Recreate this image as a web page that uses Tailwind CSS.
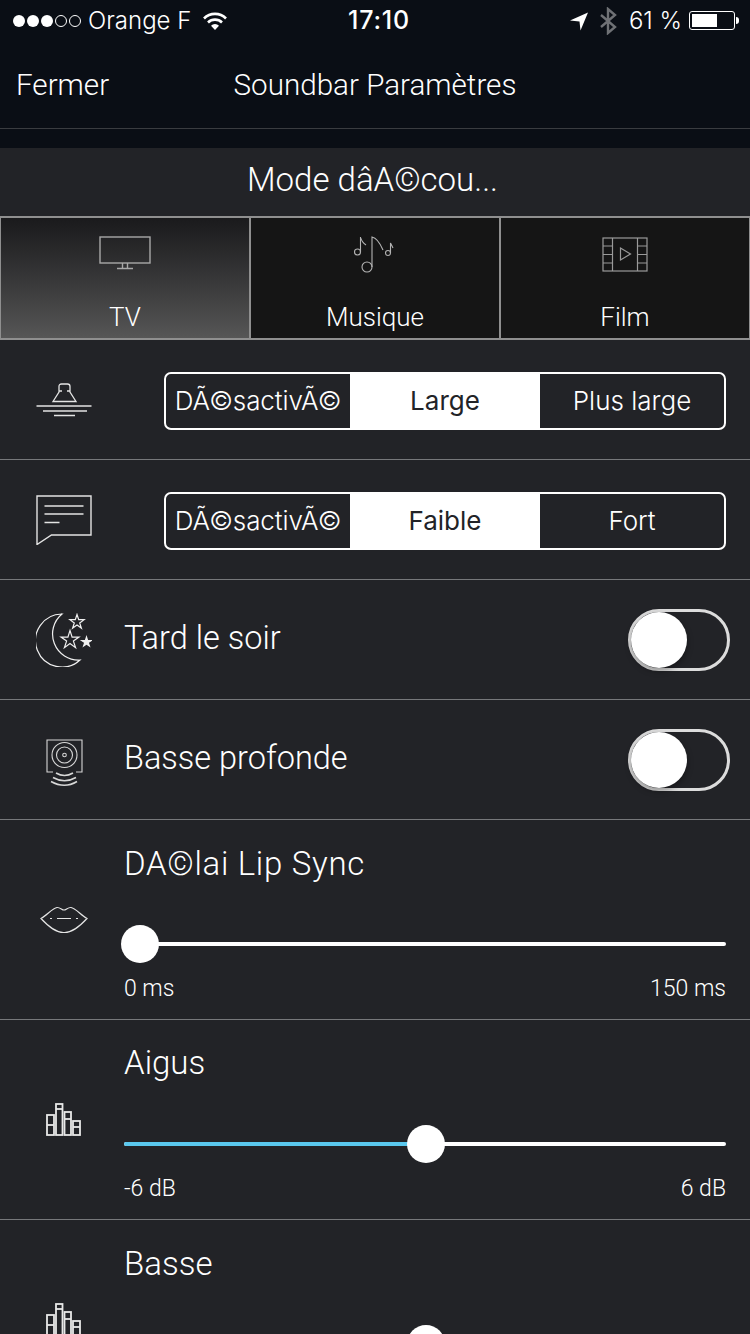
<!DOCTYPE html>
<html lang="fr">
<head>
    <meta charset="UTF-8">
    <meta name="viewport" content="width=device-width, initial-scale=1.0">
    <title>Soundbar Paramètres</title>
    <script src="https://cdn.jsdelivr.net/npm/@tailwindcss/browser@4"></script>
</head>
<body class="bg-[#222327] font-[Roboto,sans-serif] font-light text-white">
<div class="w-[750px] h-[1334px] overflow-hidden">

    <!-- Barre de statut + navigation -->
    <header class="bg-[#0a0e15] h-[148px]">
        <div class="h-[40px] pt-[1px] flex items-center justify-between pl-[13px] pr-[11px] font-[Inter,sans-serif] font-normal text-[24px] relative">
            <div class="flex items-center">
                <div class="flex gap-[2px] mr-[7px]">
                    <span class="w-[12px] h-[12px] rounded-full bg-white"></span>
                    <span class="w-[12px] h-[12px] rounded-full bg-white"></span>
                    <span class="w-[12px] h-[12px] rounded-full bg-white"></span>
                    <span class="w-[12px] h-[12px] rounded-full border border-white"></span>
                    <span class="w-[12px] h-[12px] rounded-full border border-white"></span>
                </div>
                <span class="font-light">Orange F</span>
                <svg class="ml-[11px]" width="26" height="20" viewBox="0 0 26 20" fill="none" stroke="white" stroke-width="2.6">
                    <path d="M2 7.5a15.5 15.5 0 0 1 22 0"/>
                    <path d="M6 11.5a10 10 0 0 1 14 0"/>
                    <path d="M13 19l-4-4.2a5.6 5.6 0 0 1 8 0z" fill="white" stroke="none"/>
                </svg>
            </div>
            <div class="absolute left-[348px] top-[5px] font-medium text-[25px] leading-[30px] tracking-[0.8px]">17:10</div>
            <div class="flex items-center">
                <svg width="20" height="20" viewBox="0 0 20 20"><path d="M1 9.500L19 1.500L11.500 19.500L10.500 10.500z" fill="white"/></svg>
                <svg class="ml-[10px]" width="18" height="28" viewBox="0 0 18 28" fill="none" stroke="#6f7175" stroke-width="2.400"><path d="M2 8l14 12-7 6V2l7 6L2 20"/></svg>
                <span class="ml-[12px] font-light">61 %</span>
                <div class="ml-[7px] w-[46px] h-[19px] rounded-[3px] border border-white p-[2px]">
                    <div class="w-[25px] h-full bg-white"></div>
                </div>
                <div class="ml-[1px] w-[3px] h-[7px] rounded-r-full bg-white"></div>
            </div>
        </div>
        <div class="h-[88px] border-b border-[#3a3c40] box-content -mb-px relative flex items-center justify-center text-[29.6px]">
            <span class="absolute left-[16px] top-[23px]">Fermer</span>
            <span class="mt-[2px]">Soundbar Paramètres</span>
        </div>
    </header>

    <!-- Mode d'écoute -->
    <div class="h-[68px] flex items-center justify-center text-[33px] pb-[4px] pr-[5px]">Mode dâA©cou...</div>

    <div class="h-[124px] grid grid-cols-[251px_250px_1fr] border-y-2 border-[#8f8f8f] text-[26px]">
        <div class="flex flex-col items-center bg-gradient-to-b from-[#1a1a1c] to-[#565656] border-l border-r-2 border-[#8f8f8f]">
            <svg class="mt-[18px]" width="52" height="34" viewBox="0 0 52 34" fill="none" stroke="#a8a8a8" stroke-width="1.400">
                <rect x="1" y="1" width="50" height="26"/>
                <path d="M23.500 27v5M28.500 27v5M18 32.500h16"/>
            </svg>
            <span class="mt-[28px]">TV</span>
        </div>
        <div class="flex flex-col items-center bg-[#151515] border-r-2 border-[#8f8f8f]">
            <svg class="mt-[18px]" width="42" height="38" viewBox="0 0 42 38" fill="none" stroke="#b4b4b4" stroke-width="1.100">
                <circle cx="3.500" cy="16" r="3"/><path d="M6.500 16V1q1 5 5.500 8"/>
                <circle cx="13" cy="31" r="5"/><path d="M18 31V1c5 1 8 6 11 13"/>
                <circle cx="34" cy="17" r="2.500"/><path d="M36.500 17V7l2.500 5"/>
            </svg>
            <span class="mt-[24px]">Musique</span>
        </div>
        <div class="flex flex-col items-center bg-[#151515] border-r border-[#8f8f8f]">
            <svg class="mt-[19px]" width="46" height="35" viewBox="0 0 46 35" fill="none" stroke="#9a9a9a" stroke-width="1.200">
                <rect x="1" y="1" width="44" height="33"/>
                <path d="M10.500 1v33M35.500 1v33M1 9h9.500M1 17.500h9.500M1 26h9.500M35.500 9H45M35.500 17.500H45M35.500 26H45"/>
                <path d="M18.500 11v12l10-6z"/>
            </svg>
            <span class="mt-[26px]">Film</span>
        </div>
    </div>

    <!-- Largeur -->
    <div class="h-[120px] flex items-center border-b border-[#77787b] pr-[24px]">
        <div class="w-[164px] flex justify-center pr-[36px]">
            <svg width="56" height="34" viewBox="0 0 56 34" fill="none" stroke="#e4e4e4" stroke-width="1.300">
                <path d="M17 18.500L23 9V3.500Q23 1 25.500 1h6Q34 1 34 3.500V9l6 9.500zM23 8h3M31 8h3"/>
                <path d="M0.500 23h55M7 28h44M18 32.500h21"/>
            </svg>
        </div>
        <div class="flex-1 h-[58px] mt-[2px] flex rounded-[7px] border-2 border-white font-[Inter,sans-serif] font-light text-[26px]">
            <div class="w-[184px] flex items-center justify-center tracking-[-0.1px]">DÃ©sactivÃ©</div>
            <div class="w-[190px] -my-[2px] flex items-center justify-center bg-white text-[#222327] font-normal">Large</div>
            <div class="flex-1 flex items-center justify-center">Plus large</div>
        </div>
    </div>

    <!-- Dialogue -->
    <div class="h-[120px] flex items-center border-b border-[#77787b] pr-[24px]">
        <div class="w-[164px] flex justify-center pr-[36px]">
            <svg width="56" height="50" viewBox="0 0 56 50" fill="none" stroke="#e4e4e4" stroke-width="1.400">
                <path d="M1 1h54v39H15.500L1 49.500z"/>
                <path d="M8.500 11h39M8.500 19h39M8.500 27.500h15"/>
            </svg>
        </div>
        <div class="flex-1 h-[58px] mt-[2px] flex rounded-[7px] border-2 border-white font-[Inter,sans-serif] font-light text-[26px]">
            <div class="w-[184px] flex items-center justify-center tracking-[-0.1px]">DÃ©sactivÃ©</div>
            <div class="w-[190px] -my-[2px] flex items-center justify-center bg-white text-[#222327] font-normal">Faible</div>
            <div class="flex-1 flex items-center justify-center">Fort</div>
        </div>
    </div>

    <!-- Tard le soir -->
    <div class="h-[120px] flex items-center border-b border-[#77787b] pr-[20px]">
        <div class="w-[124px] flex justify-center pl-[4px] shrink-0">
            <svg width="56" height="54" viewBox="0 0 56 54" fill="none" stroke="#f0f0f0" stroke-width="1.200">
                <path d="M26 1A26.500 26.500 0 1 0 44 47A26 26 0 0 1 26 1z"/>
                <polygon points="41,1.500 42.700,6.700 48.100,6.700 43.700,9.900 45.400,15.100 41,11.900 36.600,15.100 38.300,9.900 33.900,6.700 39.300,6.700"/>
                <polygon points="34,17.500 36.100,24.100 43,24.100 37.400,28.100 39.600,34.700 34,30.600 28.400,34.700 30.600,28.100 25,24.100 31.900,24.100"/>
                <polygon fill="#f0f0f0" points="50.500,24 51.600,27.500 55.300,27.500 52.300,29.600 53.400,33 50.500,30.900 47.600,33 48.700,29.600 45.700,27.500 49.400,27.500"/>
            </svg>
        </div>
        <span class="flex-1 text-[32.500px] -mt-[2px]">Tard le soir</span>
        <div class="relative w-[102px] h-[62px] rounded-full border-[3px] border-[#dcdcdc]">
            <div class="absolute left-0 top-0 w-[56px] h-[56px] rounded-full bg-white shadow-[0_3px_6px_rgba(0,0,0,0.35)]"></div>
        </div>
    </div>

    <!-- Basse profonde -->
    <div class="h-[120px] flex items-center border-b border-[#77787b] pr-[20px]">
        <div class="w-[124px] flex justify-center pl-[4px] pt-[6px] shrink-0">
            <svg width="38" height="48" viewBox="0 0 38 48" fill="none" stroke="#d8d8d8" stroke-width="1.100">
                <path d="M8 33H2V1h35v32h-6"/>
                <circle cx="19.500" cy="16" r="12.500"/>
                <circle cx="19.500" cy="16" r="8"/>
                <circle cx="19.500" cy="16" r="1.800"/>
                <path d="M11 34q8.500 5 17 0M8 38.500q11.500 6.500 23 0M6 42.500q13.500 7.500 26 0" stroke-width="1.500"/>
            </svg>
        </div>
        <span class="flex-1 text-[32.500px] -mt-[2px]">Basse profonde</span>
        <div class="relative w-[102px] h-[62px] rounded-full border-[3px] border-[#dcdcdc]">
            <div class="absolute left-0 top-0 w-[56px] h-[56px] rounded-full bg-white shadow-[0_3px_6px_rgba(0,0,0,0.35)]"></div>
        </div>
    </div>

    <!-- Délai Lip Sync -->
    <div class="h-[200px] flex border-b border-[#77787b] pr-[24px]">
        <div class="w-[124px] flex justify-center items-center pl-[4px] shrink-0">
            <svg width="48" height="28" viewBox="0 0 48 28" fill="none" stroke="#e4e4e4" stroke-width="1.200">
                <path d="M1 12.500C7 9 13 2 17 1.500c3-.3 5 2.500 7 2.500s4-2.800 7-2.500C35 2 41 9 47 12.500 41 19 33 27 24 26.500 15 27 7 19 1 12.500z"/>
                <path d="M10 12.500h2M17 12.500h14M36 12.500h2"/>
            </svg>
        </div>
        <div class="flex-1 flex flex-col">
            <div class="h-[88px] text-[33px] pt-[19px] tracking-[0.7px]">DA©lai Lip Sync</div>
            <div class="relative h-[4px] mt-[34px] bg-white rounded-full">
                <div class="absolute left-[-3px] top-[-17px] w-[38px] h-[38px] rounded-full bg-white"></div>
            </div>
            <div class="flex justify-between text-[23px] mt-[26px]"><span>0 ms</span><span>150 ms</span></div>
        </div>
    </div>

    <!-- Aigus -->
    <div class="h-[200px] flex border-b border-[#77787b] pr-[24px]">
        <div class="w-[124px] flex justify-center items-center pl-[4px] shrink-0">
            <svg width="36" height="34" viewBox="0 0 36 34" fill="none" stroke="#e8e8e8" stroke-width="1.800">
                <rect x="1" y="12" width="7" height="20"/><path d="M1 22h7"/>
                <rect x="10" y="1" width="6.500" height="31"/><path d="M10 6h6.500"/>
                <rect x="18.500" y="9" width="6.500" height="23"/><path d="M18.500 16h6.500"/>
                <rect x="27" y="18" width="7" height="14"/><path d="M27 24h7"/>
            </svg>
        </div>
        <div class="flex-1 flex flex-col">
            <div class="h-[88px] text-[33px] pt-[18px]">Aigus</div>
            <div class="relative h-[4px] mt-[34px] bg-white rounded-full">
                <div class="h-full w-[302px] bg-[#5ac8ee] rounded-l-full"></div>
                <div class="absolute left-[283px] top-[-17px] w-[38px] h-[38px] rounded-full bg-white"></div>
            </div>
            <div class="flex justify-between text-[23px] mt-[26px]"><span>-6 dB</span><span>6 dB</span></div>
        </div>
    </div>

    <!-- Basse -->
    <div class="h-[200px] flex pr-[24px]">
        <div class="w-[124px] flex justify-center items-center pl-[4px] shrink-0">
            <svg width="36" height="34" viewBox="0 0 36 34" fill="none" stroke="#e8e8e8" stroke-width="1.800">
                <rect x="1" y="12" width="7" height="20"/><path d="M1 22h7"/>
                <rect x="10" y="1" width="6.500" height="31"/><path d="M10 6h6.500"/>
                <rect x="18.500" y="9" width="6.500" height="23"/><path d="M18.500 16h6.500"/>
                <rect x="27" y="18" width="7" height="14"/><path d="M27 24h7"/>
            </svg>
        </div>
        <div class="flex-1 flex flex-col">
            <div class="h-[88px] text-[33px] pt-[19px]">Basse</div>
            <div class="relative h-[4px] mt-[34px] bg-white rounded-full">
                <div class="h-full w-[302px] bg-[#5ac8ee] rounded-l-full"></div>
                <div class="absolute left-[283px] top-[-17px] w-[38px] h-[38px] rounded-full bg-white"></div>
            </div>
        </div>
    </div>
</div>
</body>
</html>
